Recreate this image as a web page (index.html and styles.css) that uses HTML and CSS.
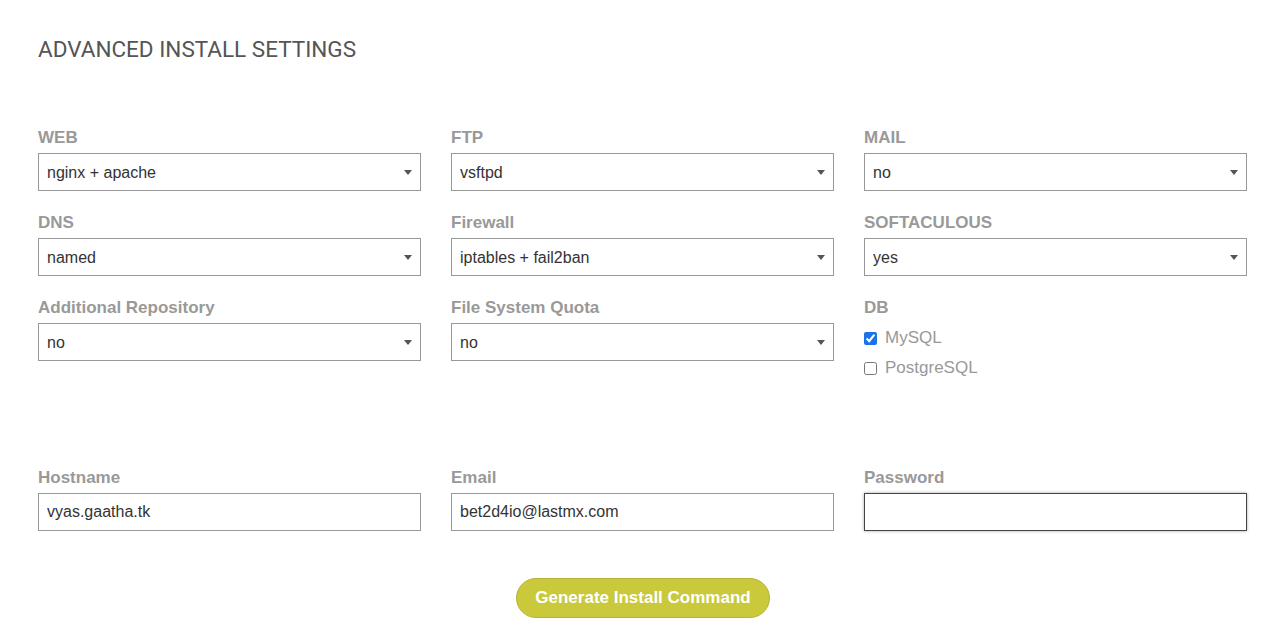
FILE: index.html
```html
<!DOCTYPE html>
<html lang="en">
<head>
    <meta charset="UTF-8">
    <meta name="viewport" content="width=device-width, initial-scale=1.0">
    <title>Advanced Install Settings</title>
    <link rel="stylesheet" href="styles.css">
</head>
<body>
    <main class="page">
        <h1>ADVANCED INSTALL SETTINGS</h1>

        <form class="install-form">
            <section class="options">
                <div class="field">
                    <label for="web">WEB</label>
                    <div class="select-wrap">
                        <select id="web"><option>nginx + apache</option><option>nginx + php-fpm</option><option>apache</option></select>
                    </div>
                </div>
                <div class="field">
                    <label for="ftp">FTP</label>
                    <div class="select-wrap">
                        <select id="ftp"><option>vsftpd</option><option>proftpd</option><option>no</option></select>
                    </div>
                </div>
                <div class="field">
                    <label for="mail">MAIL</label>
                    <div class="select-wrap">
                        <select id="mail"><option>no</option><option>yes</option></select>
                    </div>
                </div>
                <div class="field">
                    <label for="dns">DNS</label>
                    <div class="select-wrap">
                        <select id="dns"><option>named</option><option>no</option></select>
                    </div>
                </div>
                <div class="field">
                    <label for="firewall">Firewall</label>
                    <div class="select-wrap">
                        <select id="firewall"><option>iptables + fail2ban</option><option>iptables</option><option>no</option></select>
                    </div>
                </div>
                <div class="field">
                    <label for="softaculous">SOFTACULOUS</label>
                    <div class="select-wrap">
                        <select id="softaculous"><option>yes</option><option>no</option></select>
                    </div>
                </div>
                <div class="field">
                    <label for="repo">Additional Repository</label>
                    <div class="select-wrap">
                        <select id="repo"><option>no</option><option>yes</option></select>
                    </div>
                </div>
                <div class="field">
                    <label for="quota">File System Quota</label>
                    <div class="select-wrap">
                        <select id="quota"><option>no</option><option>yes</option></select>
                    </div>
                </div>
                <div class="field">
                    <label>DB</label>
                    <div class="check">
                        <input type="checkbox" id="mysql" checked>
                        <label for="mysql">MySQL</label>
                    </div>
                    <div class="check">
                        <input type="checkbox" id="pgsql">
                        <label for="pgsql">PostgreSQL</label>
                    </div>
                </div>
            </section>

            <section class="account">
                <div class="field">
                    <label for="hostname">Hostname</label>
                    <input type="text" id="hostname" value="vyas.gaatha.tk">
                </div>
                <div class="field">
                    <label for="email">Email</label>
                    <input type="text" id="email" value="bet2d4io@lastmx.com">
                </div>
                <div class="field">
                    <label for="password">Password</label>
                    <input type="password" id="password" class="active">
                </div>
            </section>

            <div class="actions">
                <button type="button">Generate Install Command</button>
            </div>
        </form>
    </main>
</body>
</html>
```

FILE: styles.css
```css
body {
    margin: 0;
    padding: 0;
    background: #fff;
    font-family: "Liberation Sans", Arial, sans-serif;
    color: #333;
}

.page {
    padding: 36px 25px 0 38px;
}

h1 {
    margin: 0;
    font-family: Roboto, sans-serif;
    font-size: 22.5px;
    line-height: 26px;
    font-weight: 400;
    color: #555;
}

.options, .account {
    display: grid;
    grid-template-columns: repeat(3, 383px);
    column-gap: 30px;
    row-gap: 22px;
}

.options {
    margin-top: 66px;
}

.account {
    margin-top: 85px;
}

.field > label {
    display: block;
    font-size: 17px;
    line-height: 20px;
    font-weight: bold;
    color: #999;
    margin-bottom: 5px;
}

.select-wrap {
    position: relative;
}

.select-wrap::after {
    content: "";
    position: absolute;
    right: 9px;
    top: 17px;
    border-left: 4px solid transparent;
    border-right: 4px solid transparent;
    border-top: 5px solid #555;
    pointer-events: none;
}

select, input[type="text"], input[type="password"] {
    display: block;
    box-sizing: border-box;
    width: 100%;
    height: 38px;
    margin: 0;
    padding: 0 8px;
    border: 1px solid #999;
    border-radius: 0;
    background: #fff;
    font-family: "Liberation Sans", Arial, sans-serif;
    font-size: 16px;
    color: #333;
    appearance: none;
    -webkit-appearance: none;
    outline: none;
}

input.active {
    border-color: #444;
    box-shadow: 0 0 3px rgba(0, 0, 0, 0.35);
}

.check {
    display: flex;
    align-items: center;
    height: 30px;
}

.check input {
    width: 13px;
    height: 13px;
    margin: 0 8px 0 0;
    accent-color: #1a73e8;
}

.check label {
    font-size: 17px;
    color: #999;
}

.actions {
    display: flex;
    justify-content: center;
    margin-top: 47px;
}

button {
    height: 40px;
    padding: 0 18px;
    background-color: #c9c93b;
    border: 1px solid #b5b535;
    border-radius: 20px;
    color: #fff;
    font-family: "Liberation Sans", Arial, sans-serif;
    font-size: 17px;
    font-weight: bold;
    cursor: pointer;
}
```
